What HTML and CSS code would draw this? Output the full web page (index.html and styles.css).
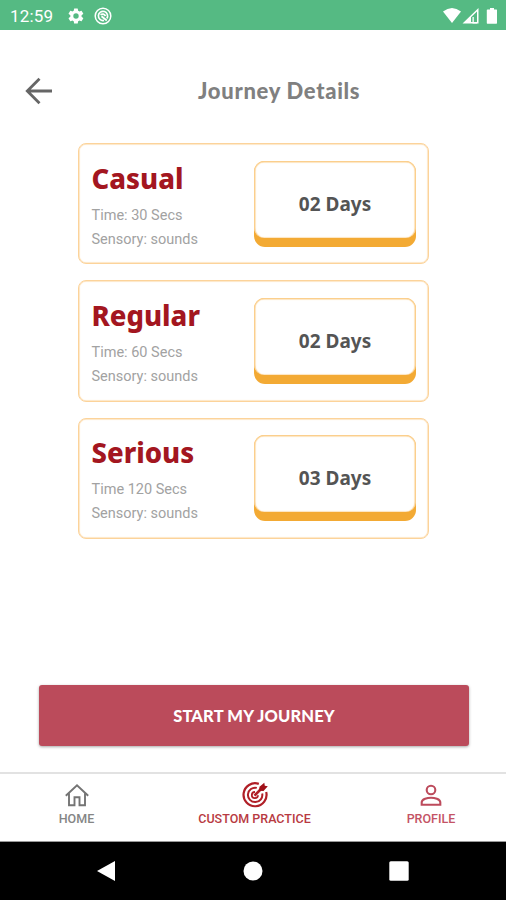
FILE: index.html
```html
<!DOCTYPE html>
<html lang="en">
<head>
<meta charset="utf-8">
<title>Journey Details</title>
<link rel="stylesheet" href="styles.css">
</head>
<body>
<header class="status">
  <span class="clock">12:59</span>
  <svg class="gear" width="18" height="18" viewBox="0 0 24 24"><path fill="#fff" fill-rule="evenodd" d="M19.4 13a7.500 7.500 0 0 0 0-2l2.100-1.600a.5.500 0 0 0 .1-.7l-2-3.400a.5.500 0 0 0-.6-.2l-2.500 1a7.300 7.300 0 0 0-1.700-1l-.4-2.700a.5.500 0 0 0-.5-.4h-4a.5.500 0 0 0-.5.400L9 5.100a7.700 7.700 0 0 0-1.700 1l-2.500-1a.5.500 0 0 0-.6.200l-2 3.400a.5.500 0 0 0 .1.700L4.500 11a8 8 0 0 0 0 2l-2.200 1.600a.5.500 0 0 0-.1.700l2 3.400c.1.200.4.300.6.200l2.500-1a7.300 7.300 0 0 0 1.700 1l.4 2.700c0 .2.200.4.500.4h4c.300 0 .5-.2.500-.4l.4-2.700a7.700 7.700 0 0 0 1.700-1l2.500 1c.2.100.5 0 .6-.2l2-3.400a.5.500 0 0 0-.1-.7zM12 15.600a3.600 3.600 0 1 1 0-7.200 3.600 3.600 0 0 1 0 7.200z"/></svg>
  <svg class="sync" width="18" height="18" viewBox="0 0 18 18" fill="none" stroke="#fff"><circle cx="9" cy="9" r="7.800" stroke-width="1.500"/><path d="M12.800 11.500A4.600 4.600 0 1 0 10 13.400" stroke-width="1.700"/><path d="M6.500 7.800Q9.500 5.800 11.500 9M7.500 9.200L12.800 13.500" stroke-width="1.800"/></svg>
  <svg class="signals" width="56" height="18" viewBox="0 0 56 18"><path fill="#fff" d="M1 4.500Q10-2.500 19 4.500L10 16z"/><path fill="#fff" fill-rule="evenodd" d="M20.500 16.500L36.500 1v15.500zM29 15h6V4.500l-6 5.800z"/><path fill="#fff" d="M30.500 10h1.300v5H35v1.500h-4.500zM45.500 2.500H48V1h4v1.500h2.500q.5 0 .5.600v13q0 .6-.6.600h-9q-.6 0-.6-.6v-13q0-.6.700-.6z"/></svg>
</header>
<div class="topbar">
  <svg class="back" width="28" height="28" viewBox="0 0 28 28" fill="none" stroke="#666" stroke-width="2.800"><path d="M27 14H2.500M14.500 1.800L2.300 14l12.200 12.200"/></svg>
  <h1 class="title">Journey Details</h1>
</div>
<main class="plans">
  <section class="card">
    <div class="info"><h2>Casual</h2><p>Time: 30 Secs</p><p>Sensory: sounds</p></div>
    <div class="days"><span>02 Days</span></div>
  </section>
  <section class="card">
    <div class="info"><h2>Regular</h2><p>Time: 60 Secs</p><p>Sensory: sounds</p></div>
    <div class="days"><span>02 Days</span></div>
  </section>
  <section class="card">
    <div class="info"><h2>Serious</h2><p>Time 120 Secs</p><p>Sensory: sounds</p></div>
    <div class="days"><span>03 Days</span></div>
  </section>
</main>
<button class="start">START MY JOURNEY</button>
<nav class="tabs">
  <div class="tab home">
    <svg width="28" height="28" viewBox="0 0 28 28" fill="none" stroke="#747474" stroke-width="1.900"><path d="M2.800 14.800L14 4.200l11.200 10.600M6 12.500v11.800h5.500v-8h5v8H22V12.500"/></svg>
    <span>HOME</span>
  </div>
  <div class="tab practice">
    <svg width="28" height="28" viewBox="0 0 28 28" fill="none" stroke="#b01f27"><path d="M17.800 2.900A11.500 11.500 0 1 0 25.200 11" stroke-width="2.200"/><path d="M15.800 6.900A7.200 7.200 0 1 0 21.200 12.500" stroke-width="2"/><path d="M14 11A3.100 3.100 0 1 0 17 14.300" stroke-width="1.800"/><path d="M13.500 14.700L21 7" stroke-width="2.600"/><path d="M18 9.800l.5-4 4.800-4.100.5 3 3 .6-4.300 4.600z" fill="#a01018" stroke="none"/></svg>
    <span>CUSTOM PRACTICE</span>
  </div>
  <div class="tab profile">
    <svg width="28" height="28" viewBox="0 0 28 28" fill="none" stroke="#bd4b5c" stroke-width="2.100"><circle cx="14" cy="9" r="4.300"/><path d="M4.700 23.800v-2.500c0-3.300 6-4.600 9.300-4.600s9.300 1.300 9.300 4.600v2.500z"/></svg>
    <span>PROFILE</span>
  </div>
</nav>
<footer class="system">
  <svg width="20" height="22" viewBox="0 0 20 22"><path fill="#fff" d="M1 11L19 1v20z"/></svg>
  <svg width="20" height="20" viewBox="0 0 20 20"><circle fill="#fff" cx="10" cy="10" r="9.500"/></svg>
  <svg width="20" height="20" viewBox="0 0 20 20"><rect fill="#fff" x=".3" y=".3" width="19.400" height="19.400" rx="1.500"/></svg>
</footer>
</body>
</html>
```
FILE: styles.css
```css
* { box-sizing: border-box; }
body {
  margin: 0;
  width: 506px;
  height: 900px;
  display: flex;
  flex-direction: column;
  background: #fff;
  font-family: Roboto, sans-serif;
  overflow: hidden;
}
h1, h2, p { margin: 0; }
svg { display: block; flex: none; }
.status {
  height: 30px;
  flex: none;
  display: flex;
  align-items: center;
  padding: 1px 8px 0 10px;
  background: #55ba83;
  color: #fff;
}
.clock { width: 57px; font-size: 17px; line-height: 20px; letter-spacing: 0.2px; }
.sync { margin-left: 9px; }
.signals { margin-left: auto; }
.topbar {
  height: 113px;
  flex: none;
  display: flex;
  align-items: center;
  padding: 8px 0 0 25px;
}
.title {
  margin-left: 145px;
  font: 900 22px/28px Lato, sans-serif;
  letter-spacing: 0.7px;
  color: #808080;
  white-space: nowrap;
}
.plans {
  height: 396px;
  flex: none;
  display: flex;
  flex-direction: column;
  gap: 16px;
  margin: 0 77px 0 78px;
}
.card {
  flex: 1;
  display: flex;
  justify-content: space-between;
  padding: 16.500px 12px 0 12.500px;
  border: 1.500px solid #fcd39a;
  border-radius: 8px;
  box-shadow: inset 0 0 1px 0.500px #fcd39a;
}
.info { color: #a2a2a2; font-size: 14.500px; line-height: 24px; white-space: nowrap; }
.info h2 {
  margin-bottom: 7px;
  font: 800 27.500px/36px "Noto Sans", sans-serif;
  color: #a31620;
}
.days {
  width: 162px;
  height: 86px;
  display: flex;
  background: #f3aa34;
  border-radius: 11px;
}
.days span {
  flex: 1;
  height: 77px;
  display: flex;
  align-items: center;
  justify-content: center;
  padding-top: 8px;
  background: #fff;
  border: 1.500px solid #fbcf8d;
  border-bottom: 0;
  border-radius: 10px;
  box-shadow: inset 0 0 1px 0.500px #fbcf8d;
  font: 700 19px/24px "Noto Sans", sans-serif;
  color: #545454;
}
.start {
  flex: none;
  width: 430px;
  height: 61px;
  margin: 146px 0 0 39px;
  border: 0;
  border-radius: 3px;
  background: #bb4b5b;
  box-shadow: 0 1px 3px rgba(0, 0, 0, 0.35);
  color: #fff;
  font: 900 16.500px/20px Lato, sans-serif;
  letter-spacing: 0.15px;
}
.tabs {
  flex: none;
  height: 70px;
  margin-top: 26px;
  display: grid;
  grid-template-columns: 153px 203px 150px;
  border-top: 2px solid #e2e2e2;
  border-bottom: 1px solid #999;
}
.tab {
  display: flex;
  flex-direction: column;
  align-items: center;
  padding-top: 7px;
  font-size: 12.500px;
  font-weight: 500;
  line-height: 16px;
  gap: 2px;
  white-space: nowrap;
}
.home { color: #858585; }
.practice { color: #b83a42; }
.profile { color: #c45365; }
.system {
  flex: 1;
  display: flex;
  align-items: center;
  justify-content: space-between;
  padding: 0 97px 0 96px;
  background: #000;
}
```
